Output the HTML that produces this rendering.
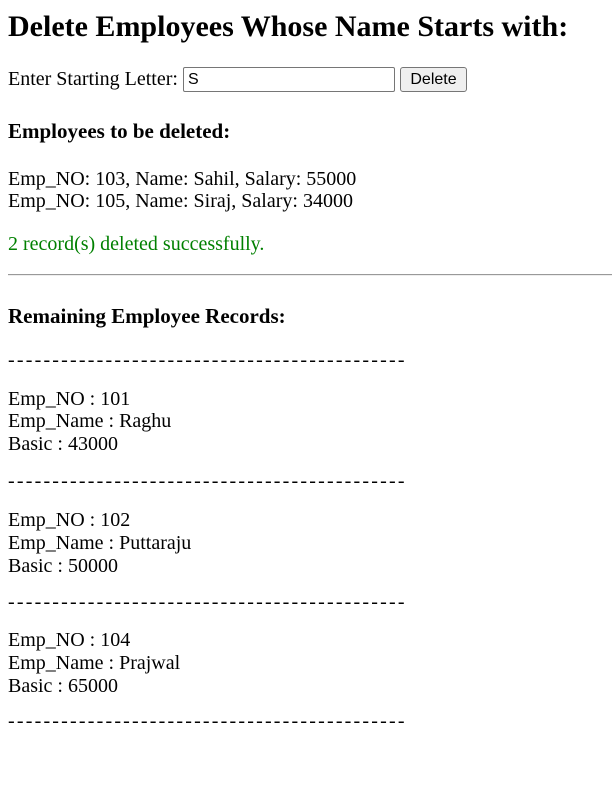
<!DOCTYPE html>
<html><head><meta charset="utf-8"><style>
body{margin:0;width:612px;height:787px;background:#fff;font-family:"Liberation Serif",serif;color:#000;position:relative;overflow:hidden}
.a{position:absolute;left:8px;white-space:nowrap;line-height:22px;font-size:20px}
h1{position:absolute;left:8px;top:7px;margin:0;font-size:30px;line-height:40px;font-weight:bold}
.h3{font-weight:bold;font-size:21px}
.g{color:#008000}
.d{letter-spacing:2.2px}
input{position:absolute;left:183px;top:67px;width:212px;height:25px;box-sizing:border-box;border:1px solid #767676;border-radius:2px;font:16px "Liberation Sans",sans-serif;padding:1px 4px;margin:0}
button{position:absolute;left:400px;top:67px;width:67px;height:25px;box-sizing:border-box;border:1px solid #767676;border-radius:3px;background:#efefef;font:16px "Liberation Sans",sans-serif;padding:0;margin:0}
hr{position:absolute;left:8px;top:274px;width:604px;margin:0;border:0;border-top:1px solid #999;border-bottom:1px solid #eee}
</style></head><body>
<h1>Delete Employees Whose Name Starts with:</h1>
<div class="a" style="top:68px">Enter Starting Letter:</div>
<input value="S"><button>Delete</button>
<div class="a h3" style="top:120px">Employees to be deleted:</div>
<div class="a" style="top:168px">Emp_NO: 103, Name: Sahil, Salary: 55000</div>
<div class="a" style="top:190px">Emp_NO: 105, Name: Siraj, Salary: 34000</div>
<div class="a g" style="top:233px">2 record(s) deleted successfully.</div>
<hr>
<div class="a h3" style="top:305px">Remaining Employee Records:</div>
<div class="a d" style="top:349px">---------------------------------------------</div>
<div class="a" style="top:388px">Emp_NO : 101</div>
<div class="a" style="top:410px">Emp_Name : Raghu</div>
<div class="a" style="top:433px">Basic : 43000</div>
<div class="a d" style="top:470px">---------------------------------------------</div>
<div class="a" style="top:509px">Emp_NO : 102</div>
<div class="a" style="top:532px">Emp_Name : Puttaraju</div>
<div class="a" style="top:555px">Basic : 50000</div>
<div class="a d" style="top:591px">---------------------------------------------</div>
<div class="a" style="top:629px">Emp_NO : 104</div>
<div class="a" style="top:652px">Emp_Name : Prajwal</div>
<div class="a" style="top:675px">Basic : 65000</div>
<div class="a d" style="top:710px">---------------------------------------------</div>
</body></html>
